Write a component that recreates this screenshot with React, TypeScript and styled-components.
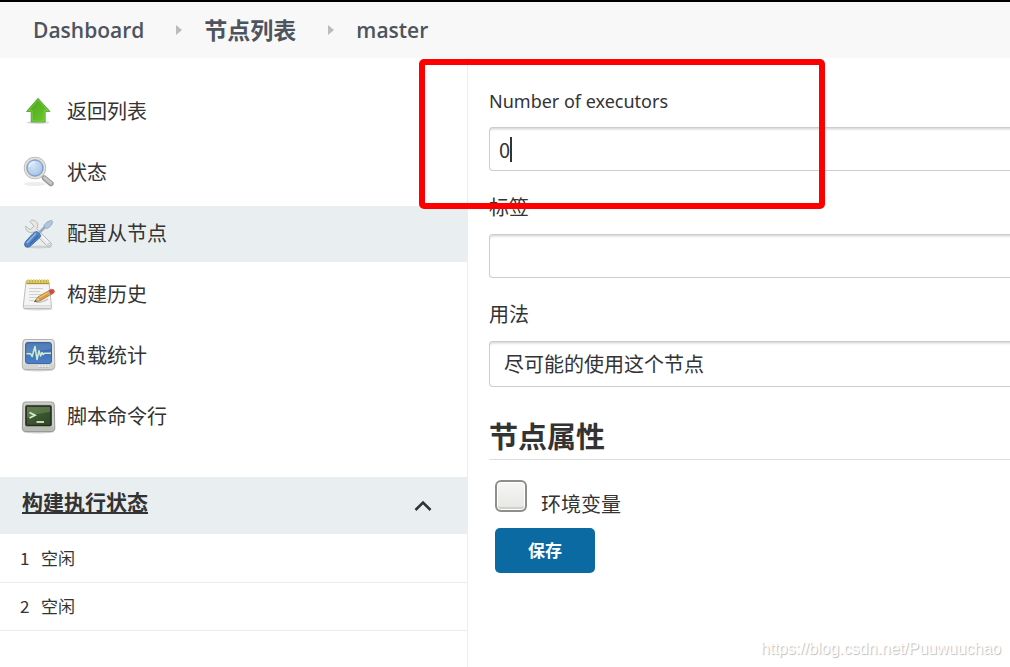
import React from "react";
import styled, { createGlobalStyle } from "styled-components";

const GlobalStyle = createGlobalStyle`
  *, *::before, *::after { box-sizing: border-box; }
  body {
    margin: 0;
    background: #fff;
    color: #333;
    font-family: "Noto Sans", "Noto Sans CJK SC", sans-serif;
    font-size: 20px;
    overflow: hidden;
  }
  button, input, select { font: inherit; color: inherit; }
`;

const Page = styled.div`
  position: relative;
  display: flex;
  flex-direction: column;
  min-height: 100vh;
`;

const Breadcrumbs = styled.nav`
  display: flex;
  align-items: center;
  height: 58px;
  padding: 0 33px;
  border-top: 2px solid #000;
  background: #f8f8f8;
`;

const Crumb = styled.a`
  color: #4d545d;
  font-family: "Open Sans", "Noto Sans CJK SC", sans-serif;
  font-size: 21px;
  font-weight: 600;
  line-height: 32px;
  text-decoration: none;
`;

const CrumbCjk = styled(Crumb)`
  padding-bottom: 2px;
  font-family: "Noto Sans CJK SC", sans-serif;
  font-size: 23px;
  font-weight: 700;
`;

const CrumbArrow = styled.svg`
  width: 6px;
  height: 10px;
  margin: 0 22px 0 32px;
`;

const Layout = styled.div`
  display: flex;
  flex: 1;
`;

const Sidebar = styled.aside`
  flex: 0 0 468px;
  border-right: 1px solid #eaeef0;
`;

const TaskList = styled.ul`
  display: flex;
  flex-direction: column;
  gap: 5px;
  margin: 0;
  padding: 26px 0 32px;
  list-style: none;
`;

const Task = styled.a<{ $active?: boolean }>`
  display: flex;
  align-items: center;
  gap: 11px;
  height: 56px;
  padding: 0 21px;
  background: ${(p) => (p.$active ? "#e9eef1" : "transparent")};
  color: #333;
  font-size: 20px;
  line-height: 28px;
  text-decoration: none;
`;

const TaskIcon = styled.svg`
  flex: none;
  width: 35px;
  height: 35px;
  margin-bottom: 1px;
`;

const PaneHeader = styled.div`
  display: flex;
  align-items: center;
  justify-content: space-between;
  height: 57px;
  padding: 0 35px 8px 22px;
  background: #e9eef1;
`;

const PaneLink = styled.a`
  color: #333;
  font-size: 21px;
  font-weight: 700;
  line-height: 32px;
  text-decoration: underline;
  text-underline-offset: 2px;
`;

const CollapseButton = styled.button`
  display: flex;
  padding: 8px 0 0;
  border: 0;
  background: none;
`;

const ExecutorTable = styled.table`
  width: 100%;
  border-collapse: collapse;
  font-size: 17px;
  line-height: 24px;
`;

const ExecutorCell = styled.td<{ $index?: boolean }>`
  width: ${(p) => (p.$index ? "41px" : "auto")};
  height: 48px;
  padding: 0 0 0 ${(p) => (p.$index ? "20px" : "0")};
  border-bottom: 1px solid #eaeef0;
  font-family: "Noto Sans CJK SC", sans-serif;
`;

const Config = styled.form`
  flex: 1;
  min-width: 0;
  padding: 29px 0 0 21px;
`;

const Field = styled.div`
  display: flex;
  flex-direction: column;
  gap: 12px;
  margin-bottom: 23px;
`;

const FieldLabel = styled.label<{ $latin?: boolean }>`
  font-size: ${(p) => (p.$latin ? "18px" : "20px")};
  line-height: 28px;
`;

const InputWrap = styled.div`
  position: relative;
  display: flex;
`;

const TextInput = styled.input`
  width: 100%;
  height: 44px;
  padding: 0 9px;
  border: 1px solid #ccc;
  border-right: 0;
  border-radius: 4px 0 0 4px;
  background: #fff;
  box-shadow: inset 0 4px 3px -3px rgba(0, 0, 0, 0.2);
  font-family: "Noto Sans CJK SC", sans-serif;
  font-size: 20px;
  outline: none;
`;

const Caret = styled.span`
  position: absolute;
  top: 10px;
  left: 21px;
  width: 2px;
  height: 25px;
  background: #333;
`;

const Select = styled.select`
  width: 100%;
  height: 46px;
  padding: 1px 14px 0;
  border: 1px solid #ccc;
  border-right: 0;
  border-radius: 4px 0 0 4px;
  background: #fff;
  box-shadow: inset 0 4px 3px -3px rgba(0, 0, 0, 0.2);
  font-size: 20px;
  appearance: none;
`;

const SectionTitle = styled.h2`
  margin: 29px 0 0;
  padding-bottom: 1px;
  border-bottom: 1px solid #ddd;
  font-size: 29px;
  font-weight: 700;
  line-height: 42px;
`;

const CheckRow = styled.div`
  display: flex;
  gap: 14px;
  padding: 20px 6px 0;
`;

const Checkbox = styled.input`
  width: 32px;
  height: 32px;
  margin: 0;
  border: 2px solid #8f8f89;
  border-radius: 6px;
  background: linear-gradient(#f6f6f5, #e6e6e5);
  box-shadow: inset 0 0 0 1px #fff, inset 0 -3px 0 #cfcfcc;
  appearance: none;
`;

const CheckLabel = styled.label`
  padding-top: 10px;
  font-size: 20px;
  line-height: 30px;
`;

const SaveButton = styled.button`
  display: block;
  width: 100px;
  height: 45px;
  margin: 8px 6px 0;
  padding: 0 0 3px;
  border: 0;
  border-radius: 5px;
  background: #0b6aa2;
  color: #fff;
  font-size: 17px;
  font-weight: 700;
`;

const Highlight = styled.div`
  position: absolute;
  top: 59px;
  left: 419px;
  width: 406px;
  height: 150px;
  border: 6px solid #f00;
  border-radius: 5px;
  pointer-events: none;
`;

const Watermark = styled.div`
  position: absolute;
  right: 9px;
  bottom: 8px;
  color: #fff;
  font-family: "Liberation Sans", Arial, sans-serif;
  font-size: 16px;
  line-height: 20px;
  text-shadow: 1px 1px 1px #bbb;
`;

const ArrowUpIcon = () => (
  <TaskIcon viewBox="0 0 35 35" aria-hidden="true">
    <defs>
      <linearGradient id="leaf" x1="0" y1="0" x2="1" y2="1">
        <stop offset="0" stopColor="#4ba51a" />
        <stop offset="0.55" stopColor="#5cb826" />
        <stop offset="1" stopColor="#6fd02c" />
      </linearGradient>
    </defs>
    <ellipse cx="17" cy="28.500" rx="11.500" ry="1.500" fill="#000" opacity="0.16" />
    <path d="M17 4.300 L29 17.500 H24.200 V28 H10.200 V17.500 H5.500 Z" fill="url(#leaf)" stroke="#55a02a" strokeWidth="0.800" strokeLinejoin="round" />
    <path d="M17 5.900 L26.800 16.600 H23.200 V27 H11.200 V16.600 H7.600 Z" fill="none" stroke="#8fda5c" strokeWidth="0.800" opacity="0.7" />
  </TaskIcon>
);

const SearchIcon = () => (
  <TaskIcon viewBox="0 0 35 35" aria-hidden="true">
    <defs>
      <radialGradient id="lens" cx="0.4" cy="0.35" r="0.7">
        <stop offset="0" stopColor="#d5e5f7" />
        <stop offset="0.6" stopColor="#b3cdec" />
        <stop offset="1" stopColor="#93b6e0" />
      </radialGradient>
    </defs>
    <ellipse cx="14" cy="29" rx="11" ry="2" fill="#000" opacity="0.07" />
    <path d="M20.500 20.500 L24 23.500" stroke="#aaa" strokeWidth="3" />
    <path d="M23.600 23.200 L30 28.600" stroke="#999996" strokeWidth="5.400" strokeLinecap="round" />
    <path d="M23.600 22.900 L29.800 28.200" stroke="#c6c6c3" strokeWidth="3" strokeLinecap="round" />
    <circle cx="14" cy="13" r="9.700" fill="url(#lens)" stroke="#b9b9b6" strokeWidth="3" />
    <circle cx="14" cy="13" r="9.700" fill="none" stroke="#e3e3e1" strokeWidth="1.500" />
    <circle cx="14" cy="13" r="7.900" fill="none" stroke="#7298c9" strokeWidth="0.900" />
    <path d="M8.300 12 Q9.300 7.300 14 7.300" fill="none" stroke="#edf5fd" strokeWidth="2" opacity="0.7" />
  </TaskIcon>
);

const ToolsIcon = () => (
  <TaskIcon viewBox="0 0 35 35" aria-hidden="true">
    <ellipse cx="17" cy="31" rx="14" ry="1.500" fill="#000" opacity="0.12" />
    <path d="M10.500 4 Q15.800 4 16.800 8.500 Q17 11.500 15.800 12.800 L30 27 Q31.300 29 29.700 30.500 Q27.800 31.800 26 30.300 L12.500 16.100 Q9.500 17.500 6.300 15.300 Q4 13 4.700 10 L9 13.700 L13 10.200 L9 5.500 Z" fill="#e6e7e5" stroke="#b9bcba" strokeWidth="1" strokeLinejoin="round" />
    <path d="M16 15.200 L28 27.500" stroke="#f9f9f8" strokeWidth="1.400" />
    <circle cx="28" cy="28.700" r="1.200" fill="#fff" stroke="#aaa" strokeWidth="0.700" />
    <path d="M17 18 L24.500 10.500" stroke="#9aabc0" strokeWidth="2.600" />
    <path d="M30.500 4.200 L31.600 5.400 Q31 10.500 25.700 12.700 L22.600 10 Q25 5.300 30.500 4.200 Z" fill="#b3c5dc" stroke="#8da4c0" strokeWidth="0.800" />
    <path d="M16 15.500 L19.800 19.200 Q19.600 21.500 17.300 23 L9 30.500 Q6 32.200 4 30 Q2.800 27.500 4.800 25.300 L11.500 18 Q13.500 15.500 16 15.500 Z" fill="#4b7fc0" stroke="#3c6aa8" strokeWidth="0.900" />
    <path d="M14.800 17.500 L6.200 26.700" stroke="#8fb5e3" strokeWidth="1.700" strokeLinecap="round" />
    <path d="M17 20 L9 28" stroke="#2f60a5" strokeWidth="1" />
  </TaskIcon>
);

const NotepadIcon = () => (
  <TaskIcon viewBox="0 0 35 35" aria-hidden="true">
    <ellipse cx="17" cy="32" rx="15" ry="1.400" fill="#000" opacity="0.15" />
    <path d="M5 4.500 H28 L30.500 30 Q30.400 31.500 29 31.500 H4 Q2.200 31.500 2.200 30 Z" fill="#f4f4f2" stroke="#bdbdba" strokeWidth="1" />
    <path d="M3 28.500 H30 M2.700 30 H30.200" stroke="#d3d3d0" strokeWidth="0.800" />
    <path d="M5.500 3 H28 V7 H5.500 Z" fill="#c4b044" />
    <path d="M7.200 2 V6 M10 2 V6 M12.800 2 V6 M15.600 2 V6 M18.400 2 V6 M21.200 2 V6 M24 2 V6 M26.800 2 V6" stroke="#e6d77e" strokeWidth="1.300" />
    <path d="M5.500 6.700 H28" stroke="#a08d3a" strokeWidth="0.900" />
    <path d="M8 11.500 H22 M8 14.500 H19 M8 17.500 H21 M8 20.500 H16 M8 23.500 H13" stroke="#cfd1d3" strokeWidth="1" />
    <path d="M15 25.200 Q22 25.600 27 22" stroke="#c2c2c2" strokeWidth="1.500" fill="none" />
    <path d="M13.500 24.600 L17.300 19.700 L28.200 13.600 L30.600 17.100 L19.600 23.600 Z" fill="#dd9a3c" stroke="#a8732c" strokeWidth="0.800" />
    <path d="M18 20.800 L28.700 14.700" stroke="#f3c870" strokeWidth="1.200" />
    <path d="M13.500 24.600 L17.300 19.700 L19.600 23.600 Z" fill="#e3c68f" stroke="#9a7d48" strokeWidth="0.600" />
    <path d="M13.200 24.900 L14.700 22.900 L15.800 24.200 Z" fill="#444" />
    <path d="M26.800 14.300 L28.900 18.100" stroke="#aab3bd" strokeWidth="1.600" />
    <path d="M28 13.700 Q30.300 11.400 32.600 12.700 Q34.500 14.600 32.400 16.200 L30.100 17.500 Z" fill="#dc4a3c" stroke="#c04438" strokeWidth="0.600" />
  </TaskIcon>
);

const MonitorIcon = () => (
  <TaskIcon viewBox="0 0 35 35" aria-hidden="true">
    <defs>
      <linearGradient id="blueScreen" x1="0" y1="0" x2="0" y2="1">
        <stop offset="0" stopColor="#3465a8" />
        <stop offset="1" stopColor="#4c80c8" />
      </linearGradient>
    </defs>
    <ellipse cx="17.500" cy="32" rx="15" ry="1.500" fill="#000" opacity="0.18" />
    <path d="M4.300 1.500 H30.700 Q33 1.500 33.200 4 L33.800 28.500 Q33.600 31.500 31 31.500 H4 Q1.500 31.500 1.300 28.500 L1.900 4 Q2.100 1.500 4.300 1.500 Z" fill="#d3d4d1" stroke="#b0b2ad" strokeWidth="1" />
    <path d="M3 26.500 L3.300 4 Q3.500 2.700 5 2.700 H30 Q31.600 2.700 31.800 4 L32.200 26.500" fill="none" stroke="#efefed" strokeWidth="1" />
    <rect x="4.500" y="4.500" width="26" height="21" rx="2.500" fill="url(#blueScreen)" stroke="#3c68a6" strokeWidth="1" />
    <path d="M5.200 7.500 Q5.200 5.200 7.500 5.200 H28 Q30 5.200 30 7 V11 Q18 12 5.200 16 Z" fill="#fff" opacity="0.14" />
    <path d="M5.500 15.700 H9.500 L11.200 18.500 L14 8.500 L16 21.500 L18 12.800 L19.600 18 L21 14.500 L22.200 16.500 L23.700 15.200 H30" fill="none" stroke="#cdeccf" strokeWidth="1.600" strokeLinejoin="round" />
    <path d="M17.500 28.300 H19 M20.500 28.300 H22 M23.500 28.300 H25 M26.500 28.300 H28" stroke="#f3f3f1" strokeWidth="1.600" />
    <path d="M17.500 29.500 H28" stroke="#b4b6b1" strokeWidth="0.600" />
  </TaskIcon>
);

const TerminalIcon = () => (
  <TaskIcon viewBox="0 0 35 35" aria-hidden="true">
    <defs>
      <linearGradient id="greenScreen" x1="0" y1="0" x2="1" y2="1">
        <stop offset="0" stopColor="#46633a" />
        <stop offset="0.5" stopColor="#3a5730" />
        <stop offset="1" stopColor="#2c4625" />
      </linearGradient>
    </defs>
    <ellipse cx="17.500" cy="33" rx="15" ry="1.500" fill="#000" opacity="0.2" />
    <path d="M4.300 3 H30.700 Q33 3 33.200 5.500 L33.800 29.500 Q33.600 32.500 31 32.500 H4 Q1.500 32.500 1.300 29.500 L1.900 5.500 Q2.100 3 4.300 3 Z" fill="#b9bbb6" stroke="#989a95" strokeWidth="1" />
    <path d="M3 28 L3.300 5.500 Q3.500 4.200 5 4.200 H30 Q31.600 4.200 31.800 5.500 L32.200 28" fill="none" stroke="#dcddda" strokeWidth="1" />
    <rect x="5" y="7" width="25" height="19.500" rx="1" fill="url(#greenScreen)" stroke="#262c23" strokeWidth="1.600" />
    <path d="M6 8 H29 V13 Q17 14 6 19 Z" fill="#b0c98e" opacity="0.25" />
    <path d="M8.500 13.500 L14 16.300 L8.500 19" fill="none" stroke="#dceccc" strokeWidth="1.700" />
    <path d="M15.500 23 H23" stroke="#c5dab1" strokeWidth="2" />
    <circle cx="24.500" cy="29.300" r="1.100" fill="#8fe051" />
  </TaskIcon>
);

const tasks = [
  { label: "返回列表", Icon: ArrowUpIcon },
  { label: "状态", Icon: SearchIcon },
  { label: "配置从节点", Icon: ToolsIcon, active: true },
  { label: "构建历史", Icon: NotepadIcon },
  { label: "负载统计", Icon: MonitorIcon },
  { label: "脚本命令行", Icon: TerminalIcon },
];

const Separator = () => (
  <CrumbArrow viewBox="0 0 6 10" aria-hidden="true">
    <path d="M0 0 L6 5 L0 10 Z" fill="#bbb" />
  </CrumbArrow>
);

export default function App() {
  return (
    <Page>
      <GlobalStyle />
      <Breadcrumbs>
        <Crumb href="#dashboard">Dashboard</Crumb>
        <Separator />
        <CrumbCjk href="#nodes">节点列表</CrumbCjk>
        <Separator />
        <Crumb href="#master">master</Crumb>
      </Breadcrumbs>
      <Layout>
        <Sidebar>
          <TaskList>
            {tasks.map(({ label, Icon, active }) => (
              <li key={label}>
                <Task href="#task" $active={active}>
                  <Icon />
                  {label}
                </Task>
              </li>
            ))}
          </TaskList>
          <PaneHeader>
            <PaneLink href="#executors">构建执行状态</PaneLink>
            <CollapseButton type="button" aria-label="collapse">
              <svg width="18" height="12" viewBox="0 0 18 12">
                <path d="M1.500 10 L9 2.500 L16.500 10" fill="none" stroke="#333" strokeWidth="2.600" />
              </svg>
            </CollapseButton>
          </PaneHeader>
          <ExecutorTable>
            <tbody>
              {[1, 2].map((n) => (
                <tr key={n}>
                  <ExecutorCell $index>{n}</ExecutorCell>
                  <ExecutorCell>空闲</ExecutorCell>
                </tr>
              ))}
            </tbody>
          </ExecutorTable>
        </Sidebar>
        <Config>
          <Field>
            <FieldLabel htmlFor="executors" $latin>
              Number of executors
            </FieldLabel>
            <InputWrap>
              <TextInput id="executors" type="text" defaultValue="0" />
              <Caret />
            </InputWrap>
          </Field>
          <Field>
            <FieldLabel htmlFor="labels">标签</FieldLabel>
            <TextInput id="labels" type="text" />
          </Field>
          <Field>
            <FieldLabel htmlFor="usage">用法</FieldLabel>
            <Select id="usage">
              <option>尽可能的使用这个节点</option>
            </Select>
          </Field>
          <SectionTitle>节点属性</SectionTitle>
          <CheckRow>
            <Checkbox id="env" type="checkbox" />
            <CheckLabel htmlFor="env">环境变量</CheckLabel>
          </CheckRow>
          <SaveButton type="button">保存</SaveButton>
        </Config>
      </Layout>
      <Highlight />
      <Watermark>https://blog.csdn.net/Puuwuuchao</Watermark>
    </Page>
  );
}
